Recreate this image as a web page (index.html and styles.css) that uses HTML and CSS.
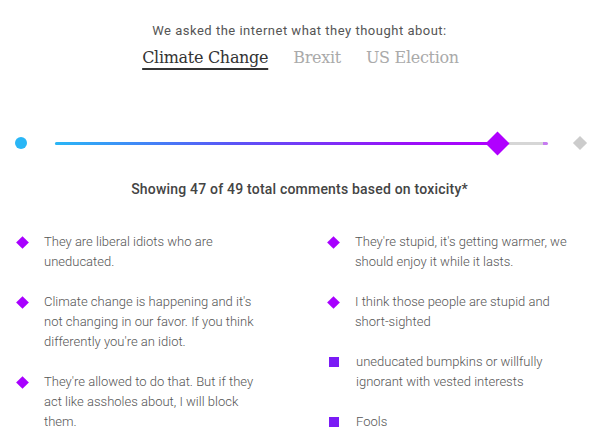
FILE: index.html
```html
<!DOCTYPE html>
<html lang="en">
<head>
  <meta charset="UTF-8">
  <meta name="viewport" content="width=device-width, initial-scale=1.0">
  <title>Toxicity</title>
  <link rel="stylesheet" href="styles.css">
</head>
<body>
  <p class="intro">We asked the internet what they thought about:</p>

  <div class="topics">
    <span class="topic active">Climate Change</span>
    <span class="topic">Brexit</span>
    <span class="topic">US Election</span>
  </div>

  <div class="slider">
    <span class="dot"></span>
    <div class="track">
      <div class="fill" style="width: 442px"></div>
      <span class="handle" style="left: 442px"></span>
    </div>
    <span class="end"></span>
  </div>

  <p class="count">Showing 47 of 49 total comments based on toxicity*</p>

  <div class="comments">
    <ul class="col">
      <li><span class="mark diamond"></span><p>They are liberal idiots who are uneducated.</p></li>
      <li><span class="mark diamond"></span><p>Climate change is happening and it's not changing in our favor. If you think differently you're an idiot.</p></li>
      <li><span class="mark diamond"></span><p>They're allowed to do that. But if they act like assholes about, I will block them.</p></li>
    </ul>
    <ul class="col">
      <li><span class="mark diamond"></span><p>They're stupid, it's getting warmer, we should enjoy it while it lasts.</p></li>
      <li><span class="mark diamond"></span><p>I think those people are stupid and short-sighted</p></li>
      <li><span class="mark square"></span><p>uneducated bumpkins or willfully ignorant with vested interests</p></li>
      <li><span class="mark square"></span><p>Fools</p></li>
    </ul>
  </div>
</body>
</html>
```

FILE: styles.css
```css
body {
  margin: 0;
  font-family: Roboto, "Liberation Sans", sans-serif;
  background: #fff;
  color: #555;
}
.intro {
  margin: 21px 0 0;
  text-align: center;
  font-size: 13px;
  line-height: 20px;
  letter-spacing: 0.5px;
  font-weight: 400;
  color: #555;
}
.topics {
  display: flex;
  justify-content: center;
  gap: 25px;
  margin-top: 5px;
  padding-left: 2px;
}
.topic {
  font-family: "DejaVu Serif", serif;
  font-size: 16px;
  line-height: 24px;
  color: #aaa;
  letter-spacing: -0.3px;
}
.topic.active {
  color: #333;
  text-decoration: underline;
  text-decoration-thickness: 1.5px;
  text-underline-offset: 5px;
}
.slider {
  display: flex;
  align-items: center;
  height: 30px;
  margin-top: 58px;
  padding-left: 15px;
}
.dot {
  width: 12px;
  height: 12px;
  border-radius: 50%;
  background: #29b6f6;
}
.track {
  position: relative;
  width: 493px;
  height: 3px;
  margin-left: 28px;
  background: linear-gradient(to right, #d6d6d6 99%, #c67bf0 99%);
  border-radius: 2px;
}
.fill {
  height: 3px;
  border-radius: 2px;
  background: linear-gradient(to right, #29b6f6, #5a55f6 40%, #9a10f8 80%, #b000ff);
}
.handle {
  position: absolute;
  top: -7px;
  width: 17px;
  height: 17px;
  margin-left: -8px;
  background: #b000ff;
  transform: rotate(45deg);
}
.end {
  width: 10px;
  height: 10px;
  margin-left: 27px;
  background: #ccc;
  transform: rotate(45deg);
}
.count {
  margin: 21px 0 0;
  text-align: center;
  font-size: 14px;
  line-height: 20px;
  font-weight: 500;
  letter-spacing: 0.2px;
  color: #444;
}
.comments {
  display: flex;
  margin-top: 33px;
  padding-left: 16px;
}
.col {
  flex: none;
  list-style: none;
  margin: 0;
  padding: 0;
  width: 311px;
}
.col + .col {
  width: 260px;
}
.col li {
  display: flex;
  margin-bottom: 20px;
}
.col p {
  margin: 0 0 0 16px;
  width: 222px;
  font-size: 13px;
  line-height: 20px;
  font-weight: 300;
  color: #555;
}
.mark {
  flex: none;
  width: 9px;
  height: 9px;
  margin-top: 6px;
  margin-left: 2px;
  margin-right: 1px;
}
.diamond {
  background: #a800ff;
  transform: rotate(45deg);
}
.square {
  width: 10px;
  height: 10px;
  margin-top: 5px;
  background: #7a1cf5;
}
```
